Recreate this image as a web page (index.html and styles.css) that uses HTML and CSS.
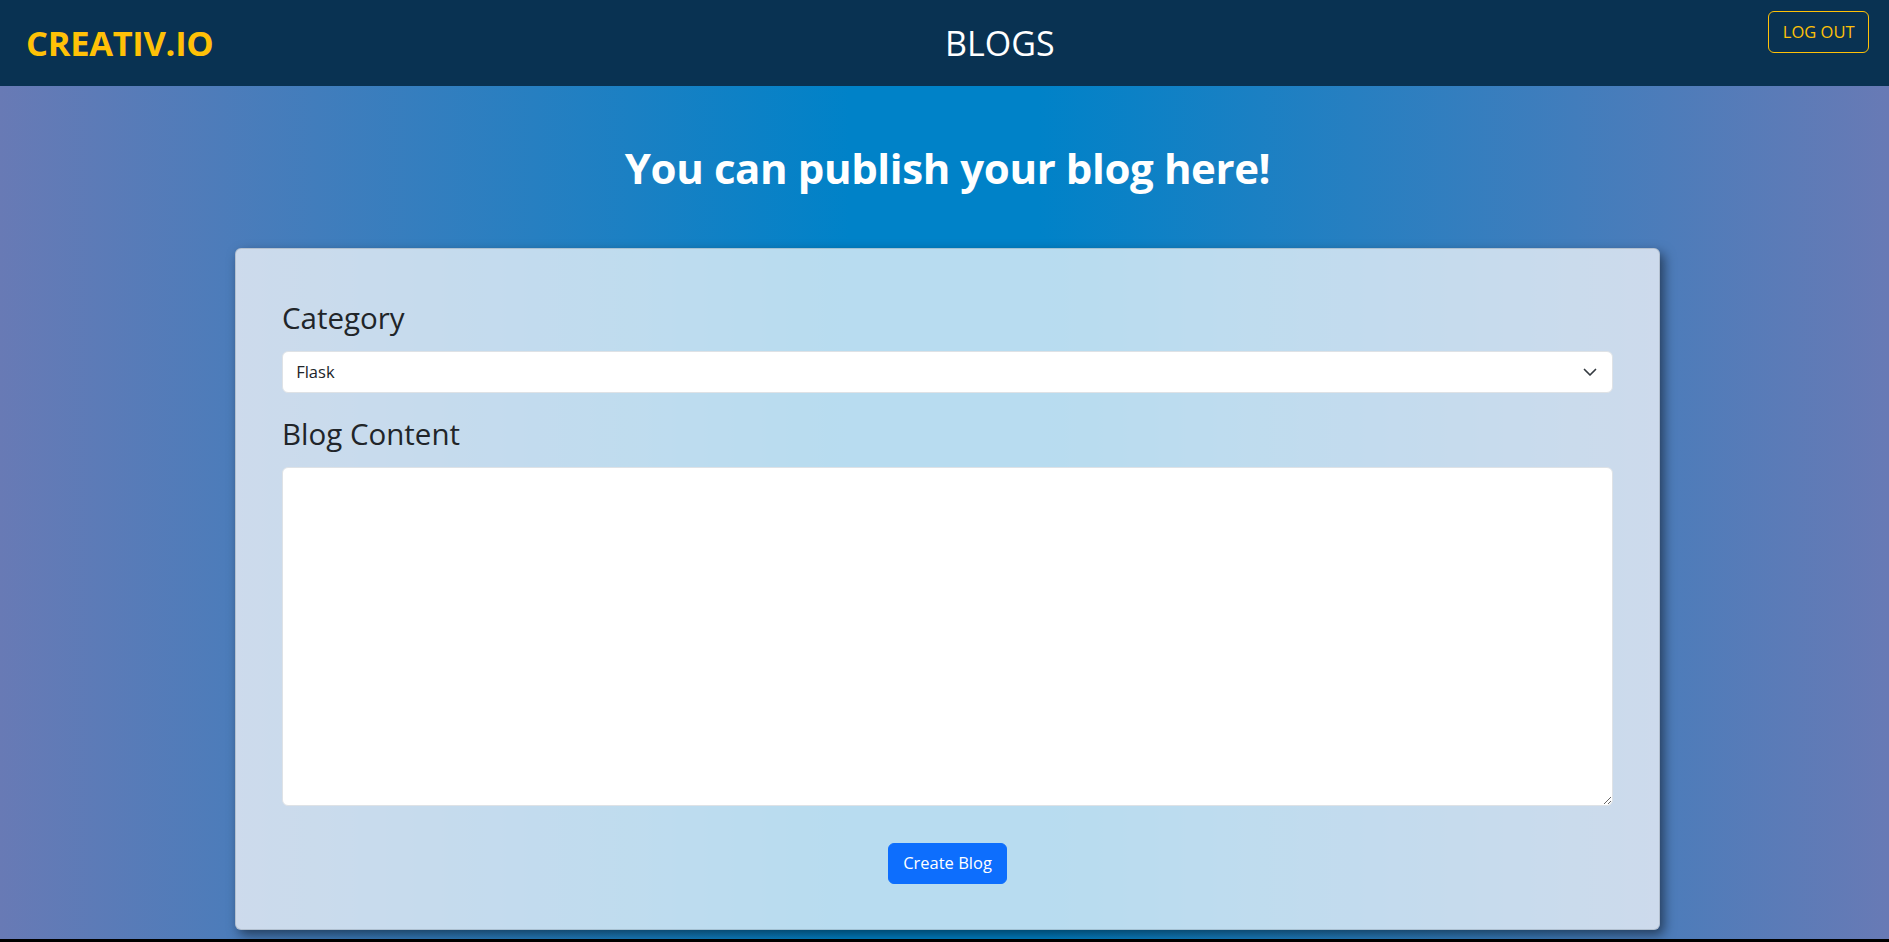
FILE: index.html
```html
<!DOCTYPE html>
<html lang="en">
<head>
<meta charset="utf-8">
<title>Blogs</title>
<link rel="stylesheet" href="styles.css">
</head>
<body>
<nav class="topbar">
  <a class="brand" href="#">CREATIV.IO</a>
  <div class="page-title">BLOGS</div>
  <button class="btn-logout" type="button">LOG OUT</button>
</nav>
<main class="main">
  <h1 class="headline">You can publish your blog here!</h1>
  <form class="card">
    <label class="field-label" for="category">Category</label>
    <div class="select-wrap">
      <select id="category" class="form-select">
        <option>Flask</option>
      </select>
      <svg class="chevron" viewBox="0 0 16 16" width="16" height="16" aria-hidden="true"><path d="m2.5 5.5 5.5 5.5 5.5-5.5" fill="none" stroke="#343a40" stroke-width="1.7" stroke-linecap="round" stroke-linejoin="round"/></svg>
    </div>
    <label class="field-label" for="content">Blog Content</label>
    <textarea id="content" class="form-textarea"></textarea>
    <div class="actions">
      <button class="btn-primary" type="button">Create Blog</button>
    </div>
  </form>
</main>
</body>
</html>
```

FILE: styles.css
```css
html {
  background: #000;
}
* {
  box-sizing: border-box;
}
body {
  margin: 0;
  height: 939px;
  font-family: "Segoe UI", "Open Sans", "Noto Sans", sans-serif;
  color: #212529;
  background: linear-gradient(90deg, #687ab5 0%, #0082c8 45%, #0082c8 55%, #687ab5 100%);
}
.topbar {
  height: 86px;
  background: #093252;
  display: flex;
  align-items: center;
  justify-content: space-between;
  padding: 0 20px 0 26px;
}
.brand {
  color: #ffc107;
  font-weight: 700;
  font-size: 34.5px;
  text-decoration: none;
  letter-spacing: -0.3px;
  line-height: 1.2;
}
.page-title {
  color: #fff;
  font-size: 34px;
  font-weight: 400;
  line-height: 1.2;
  margin-left: 18px;
}
.btn-logout {
  align-self: flex-start;
  margin-top: 11px;
  font-family: inherit;
  font-size: 16.5px;
  line-height: 26.4px;
  color: #ffc107;
  background: transparent;
  border: 1px solid #ffc107;
  border-radius: 6px;
  padding: 6.6px 13.5px;
  cursor: pointer;
}
.main {
  padding: 56px 0 0 6px;
}
.headline {
  margin: 0 0 53px;
  text-align: center;
  color: #fff;
  font-size: 42px;
  font-weight: 700;
  line-height: 52.8px;
  letter-spacing: -0.4px;
}
.card {
  display: block;
  width: 1425px;
  margin: 0 auto;
  background: rgba(255, 255, 255, 0.72);
  border: 1px solid rgba(0, 0, 0, 0.12);
  border-radius: 6px;
  padding: 46px 46px 45px;
  box-shadow: 4px 5px 12px rgba(0, 0, 0, 0.5);
}
.field-label {
  display: block;
  font-size: 29.5px;
  line-height: 46px;
  margin-bottom: 10px;
  color: #212529;
}
.select-wrap {
  position: relative;
  margin-bottom: 18px;
}
.form-select {
  display: block;
  width: 100%;
  height: 41.8px;
  appearance: none;
  -webkit-appearance: none;
  background: #fff;
  border: 1px solid #dee2e6;
  border-radius: 6px;
  padding: 0 40px 0 13.2px;
  font-family: inherit;
  font-size: 16.5px;
  color: #212529;
}
.chevron {
  position: absolute;
  right: 15px;
  top: 13px;
  pointer-events: none;
}
.form-textarea {
  display: block;
  width: 100%;
  height: 339px;
  background: #fff;
  border: 1px solid #dee2e6;
  border-radius: 6px;
  padding: 7px 13px;
  font-family: inherit;
  font-size: 16.5px;
  resize: vertical;
}
.actions {
  display: flex;
  justify-content: center;
  margin-top: 37px;
}
.btn-primary {
  font-family: inherit;
  font-size: 16.5px;
  line-height: 26.4px;
  color: #fff;
  background: #0d6efd;
  border: 1px solid #0d6efd;
  border-radius: 6px;
  padding: 6.6px 14px;
  cursor: pointer;
}
```
